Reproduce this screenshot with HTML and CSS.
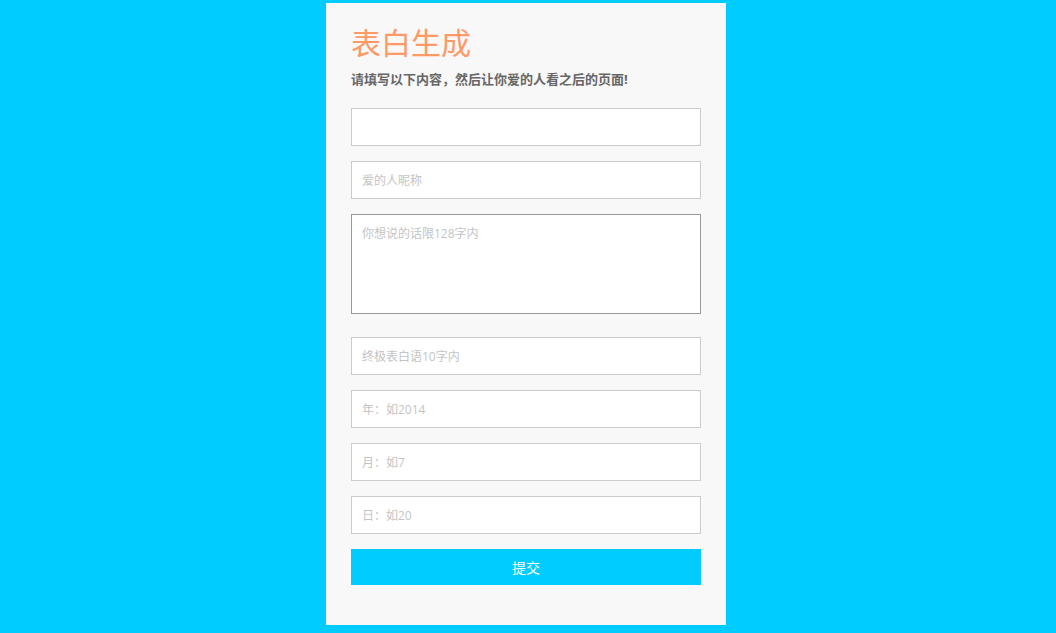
FILE: index.html
```html
<!DOCTYPE html>
<html lang="zh">
<head>
<meta charset="utf-8">
<title>表白生成</title>
<link rel="stylesheet" href="styles.css">
</head>
<body>
<div class="page">
  <div class="card">
    <h1 class="title">表白生成</h1>
    <p class="subtitle">请填写以下内容，然后让你爱的人看之后的页面!</p>
    <form class="form">
      <input class="field" type="text">
      <input class="field" type="text" placeholder="爱的人昵称">
      <textarea class="area" placeholder="你想说的话限128字内"></textarea>
      <input class="field" type="text" placeholder="终极表白语10字内">
      <input class="field" type="text" placeholder="年：如2014">
      <input class="field" type="text" placeholder="月：如7">
      <input class="field" type="text" placeholder="日：如20">
      <button class="submit" type="button">提交</button>
    </form>
  </div>
</div>
</body>
</html>
```
FILE: styles.css
```css
html, body {
  margin: 0;
  padding: 0;
  background: #00ccff;
  font-family: "Open Sans", "Noto Sans CJK SC", sans-serif;
}
.page {
  padding: 3px 4px 8px 0;
  display: flex;
  justify-content: center;
}
.card {
  width: 400px;
  box-sizing: border-box;
  background: #f8f8f8;
  padding: 20px 25px 40px;
}
.title {
  margin: 0;
  font-size: 30px;
  line-height: 40px;
  font-weight: normal;
  color: #ff9966;
}
.subtitle {
  margin: 6px 0 0;
  font-size: 13px;
  line-height: 20px;
  font-weight: bold;
  color: #666;
}
.form {
  margin-top: 19px;
  display: flex;
  flex-direction: column;
}
.field, .area {
  width: 350px;
  box-sizing: border-box;
  background: #fff;
  border: 1px solid #ccc;
  padding: 0 10px;
  font-family: "Open Sans", "Noto Sans CJK SC", sans-serif;
  font-size: 12px;
  color: #333;
  outline: none;
  margin: 0 0 15px;
}
.field {
  height: 38px;
}
.area {
  height: 100px;
  padding: 10px 10px;
  border-color: #999;
  resize: none;
  margin-bottom: 23px;
  line-height: 18px;
}
.field::placeholder, .area::placeholder {
  color: #c4c4c4;
}
.submit {
  width: 350px;
  height: 36px;
  border: none;
  background: #00ccff;
  color: #fff;
  font-family: "Open Sans", "Noto Sans CJK SC", sans-serif;
  font-size: 14px;
  padding: 0;
  cursor: pointer;
}
```
